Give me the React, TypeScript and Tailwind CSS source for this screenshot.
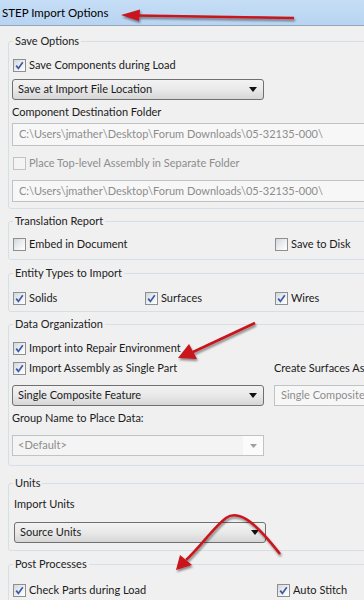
import type { ReactNode } from 'react';

const Check = ({ checked = false, disabled = false }: { checked?: boolean; disabled?: boolean }) => (
  <span
    className={
      disabled
        ? 'w-[13px] h-[13px] shrink-0 border border-[#c3c3c3] bg-[#f4f4f4] flex items-center justify-center'
        : 'w-[13px] h-[13px] shrink-0 border border-[#8e8f8f] bg-gradient-to-br from-[#d2d6dc] via-[#eceef1] to-white flex items-center justify-center'
    }
  >
    {checked && (
      <svg width="9" height="9" viewBox="0 0 9 9">
        <path d="M1.2 4.6 L3.4 7.4 L7.8 1.2" fill="none" stroke="#3d5aa6" strokeWidth="1.7" />
      </svg>
    )}
  </span>
);

const CheckRow = ({ label, checked, disabled }: { label: string; checked?: boolean; disabled?: boolean }) => (
  <div className="h-[16px] flex items-center gap-[3px] pl-[1px] whitespace-nowrap">
    <Check checked={checked} disabled={disabled} />
    <span className={disabled ? 'text-[#8d8d8d]' : ''}>{label}</span>
  </div>
);

const Select = ({ value, className = '' }: { value: string; className?: string }) => (
  <div
    className={`h-[21px] w-[252px] shrink-0 border border-[#707070] rounded-[3px] bg-gradient-to-b from-[#f3f3f3] via-[#e9e9e9] to-[#d6d6d6] flex items-center justify-between pl-[5px] pr-[6px] ${className}`}
  >
    <span>{value}</span>
    <svg width="8" height="5" viewBox="0 0 8 5">
      <path d="M0 0 H8 L4 5 Z" fill="#111" />
    </svg>
  </div>
);

const TextBox = ({ value, className = '' }: { value: string; className?: string }) => (
  <div className={`border border-[#bfc3c6] bg-[#f7f7f7] flex items-center pl-[6px] text-[#8d8d8d] whitespace-nowrap overflow-hidden ${className}`}>
    {value}
  </div>
);

const Group = ({ title, className = '', children }: { title: string; className?: string; children: ReactNode }) => (
  <fieldset className={`w-[420px] border border-[#d5dfe5] rounded-[3px] pl-[3px] ${className}`}>
    <legend className="ml-[1px] px-[2px] leading-[16px] text-[#222]">{title}</legend>
    {children}
  </fieldset>
);

export default function App() {
  return (
    <div className="w-[364px] h-[600px] overflow-hidden relative bg-[#f0f0f0] font-['Lato','Liberation_Sans',Arial,sans-serif] text-[11px] text-[#1b1b1b]">
      {/* Title bar */}
      <div className="h-[26px] bg-gradient-to-b from-[#c6def6] to-[#b8d4f1] border-b border-[#8fa6bd] flex items-center pl-[2px]">
        <span className="text-[11.5px] text-black">STEP Import Options</span>
      </div>

      <div className="flex h-[574px]">
        <div className="w-[2px] bg-[#c9d6e2]" />
        <div className="w-[1px] bg-[#7d858d]" />
        <div className="pl-[8px] flex flex-col">
          <Group title="Save Options" className="mt-[7px] pb-[6px]">
            <div className="mt-[8px]">
              <CheckRow label="Save Components during Load" checked />
            </div>
            <Select value="Save at Import File Location" className="mt-[6px]" />
            <div className="mt-[4px] leading-[16px]">Component Destination Folder</div>
            <TextBox value="C:\Users\jmather\Desktop\Forum Downloads\05-32135-000\" className="mt-[3px] h-[23px] w-[410px]" />
            <div className="mt-[9px]">
              <CheckRow label="Place Top-level Assembly in Separate Folder" disabled />
            </div>
            <TextBox value="C:\Users\jmather\Desktop\Forum Downloads\05-32135-000\" className="mt-[9px] h-[22px] w-[410px]" />
          </Group>

          <Group title="Translation Report" className="mt-[4px] pb-[7px]">
            <div className="mt-[7px] grid grid-cols-[262px_1fr]">
              <CheckRow label="Embed in Document" />
              <CheckRow label="Save to Disk" />
            </div>
          </Group>

          <Group title="Entity Types to Import" className="mt-[5px] pb-[5px]">
            <div className="mt-[9px] grid grid-cols-[132px_130px_1fr]">
              <CheckRow label="Solids" checked />
              <CheckRow label="Surfaces" checked />
              <CheckRow label="Wires" checked />
            </div>
          </Group>

          <Group title="Data Organization" className="mt-[4px] pb-[9px]">
            <div className="mt-[8px]">
              <CheckRow label="Import into Repair Environment" checked />
            </div>
            <div className="mt-[4px] grid grid-cols-[262px_1fr] items-center">
              <CheckRow label="Import Assembly as Single Part" checked />
              <span className="leading-[16px] whitespace-nowrap">Create Surfaces As</span>
            </div>
            <div className="mt-[9px] flex gap-[10px]">
              <Select value="Single Composite Feature" />
              <TextBox value="Single Composite Feature" className="h-[21px] w-[140px]" />
            </div>
            <div className="mt-[4px] leading-[16px]">Group Name to Place Data:</div>
            <div className="mt-[9px] h-[21px] w-[252px] border border-[#bfc3c6] bg-[#f4f4f4] flex items-center justify-between">
              <span className="pl-[5px] text-[#8d8d8d]">&lt;Default&gt;</span>
              <span className="h-full w-[20px] bg-[#fbfbfb] flex items-center justify-center">
                <svg width="7" height="4" viewBox="0 0 7 4">
                  <path d="M0 0 H7 L3.5 4 Z" fill="#a0a0a0" />
                </svg>
              </span>
            </div>
          </Group>

          <Group title="Units" className="mt-[9px] pb-[7px]">
            <div className="mt-[5px] pl-[2px] leading-[16px]">Import Units</div>
            <Select value="Source Units" className="mt-[10px] ml-[2px]" />
          </Group>

          <Group title="Post Processes" className="mt-[5px] pb-[10px]">
            <div className="mt-[10px] grid grid-cols-[264px_1fr]">
              <CheckRow label="Check Parts during Load" checked />
              <CheckRow label="Auto Stitch" checked />
            </div>
          </Group>
        </div>
      </div>

      {/* Red annotation arrows drawn over the screenshot */}
      <svg className="absolute inset-0 pointer-events-none" width="364" height="600" viewBox="0 0 364 600">
        <defs>
          <filter id="sh" x="-20%" y="-20%" width="140%" height="140%">
            <feDropShadow dx="1" dy="2" stdDeviation="1.2" floodColor="#000" floodOpacity="0.45" />
          </filter>
        </defs>
        <g filter="url(#sh)" fill="#c8141c" stroke="#c8141c">
          <path d="M294 18 L136 15.5" fill="none" strokeWidth="2.6" />
          <path d="M121 15 L140 9.5 L139 21 Z" stroke="none" />

          <path d="M255 323 L193 352" fill="none" strokeWidth="2.6" />
          <path d="M178 358 L189 344 L197 359 Z" stroke="none" />

          <path d="M280 554 C258 526 240 508 226 518 C214 527 200 547 186 560" fill="none" strokeWidth="2.6" />
          <path d="M176 570 L180 555 L192 565 Z" stroke="none" />
        </g>
      </svg>
    </div>
  );
}
